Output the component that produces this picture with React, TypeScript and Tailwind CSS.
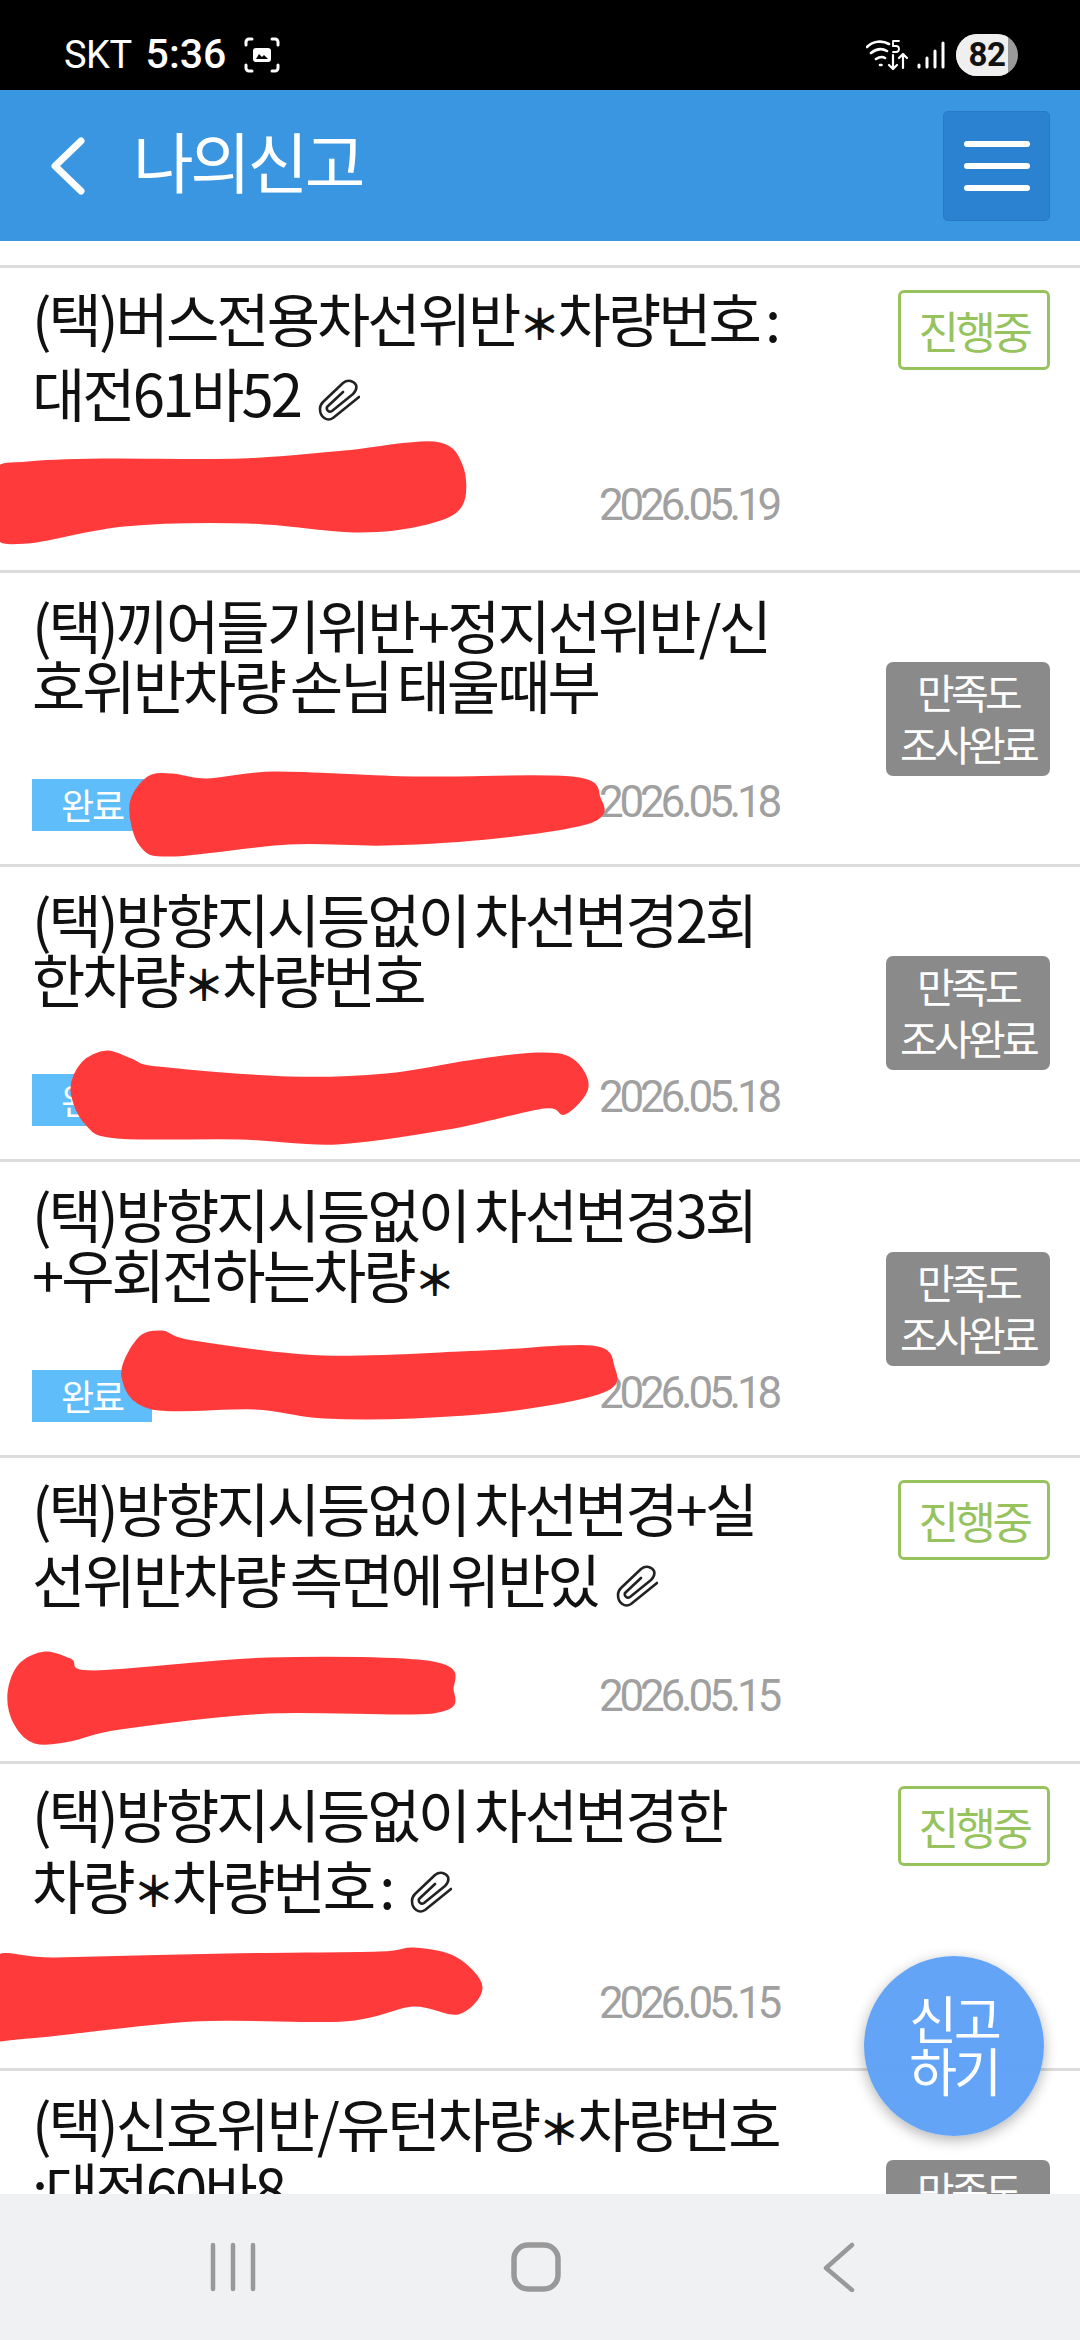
import React from "react";

const KR = "font-['Noto_Sans_CJK_KR','Noto_Sans',sans-serif]";

function smooth(p: number[][]) {
  const n = p.length;
  let d = `M${p[0][0]},${p[0][1]}`;
  for (let i = 0; i < n; i++) {
    const a = p[(i - 1 + n) % n], b = p[i], c = p[(i + 1) % n], e = p[(i + 2) % n];
    d += `C${b[0] + (c[0] - a[0]) / 6},${b[1] + (c[1] - a[1]) / 6} ${c[0] - (e[0] - b[0]) / 6},${c[1] - (e[1] - b[1]) / 6} ${c[0]},${c[1]}`;
  }
  return d + "Z";
}

const blobs: number[][][] = [
  [[-6,473],[28,463],[103,460],[241,460],[344,452],[434,443],[461,465],[461,505],[427,523],[358,531],[248,522],[124,525],[28,542],[-6,533]],
  [[131,805],[148,778],[172,775],[207,780],[275,773],[413,778],[572,778],[599,798],[592,821],[496,837],[386,844],[289,843],[172,855],[141,845]],
  [[72,1090],[83,1063],[107,1052],[131,1060],[158,1068],[289,1078],[386,1075],[468,1062],[537,1054],[572,1060],[587,1087],[565,1113],[544,1107],[448,1128],[337,1143],[241,1138],[117,1137],[86,1123]],
  [[123,1377],[138,1340],[162,1332],[193,1342],[324,1357],[482,1352],[592,1347],[613,1367],[606,1390],[523,1408],[413,1417],[324,1417],[255,1408],[152,1408]],
  [[9,1693],[20,1665],[45,1653],[70,1660],[95,1672],[268,1659],[433,1663],[452,1689],[433,1712],[268,1712],[120,1728],[70,1740],[35,1742],[15,1723]],
  [[-6,1960],[55,1959],[227,1955],[379,1953],[413,1949],[455,1958],[481,1987],[458,2013],[413,2005],[344,2020],[193,2020],[28,2037],[-6,2032]],
];

function Clip() {
  return (
    <svg viewBox="0 0 42 42" className="inline-block w-[42px] h-[42px] ml-[18px] align-[-4px]" fill="none" stroke="#222" strokeWidth="2.6" strokeLinecap="round" strokeLinejoin="round">
      <path d="M41 18 15 39C9 43 2 38 2 30c0-3 1-5 3-7L25 4c5-4 11-2 13 2 1 3 0 6-3 9L14 32c-3 2-6-1-5-4L25 13" />
    </svg>
  );
}

function Star() {
  return <span className="text-[42px] font-bold align-[2px] tracking-[-3px]">＊</span>;
}

type Row = { h: number; l: React.ReactNode; status: "p" | "s"; done?: boolean; date: string; clip?: boolean };

const rows: Row[] = [
  { h: 305, l: <>(택)버스전용차선위반<Star />차량번호 :<br />대전61바52</>, status: "p", date: "2026.05.19", clip: true },
  { h: 294, l: <>(택)끼어들기위반+정지선위반/신<br />호위반차량 손님 태울때부</>, status: "s", done: true, date: "2026.05.18" },
  { h: 295, l: <>(택)방향지시등없이 차선변경2회<br />한차량<Star />차량번호</>, status: "s", done: true, date: "2026.05.18" },
  { h: 296, l: <>(택)방향지시등없이 차선변경3회<br />+우회전하는차량<Star /></>, status: "s", done: true, date: "2026.05.18" },
  { h: 306, l: <>(택)방향지시등없이 차선변경+실<br />선위반차량 측면에 위반있</>, status: "p", date: "2026.05.15", clip: true },
  { h: 307, l: <>(택)방향지시등없이 차선변경한<br />차량<Star />차량번호 :</>, status: "p", date: "2026.05.15", clip: true },
  { h: 295, l: <>(택)신호위반/유턴차량<Star />차량번호<br />:대전60바8</>, status: "s", date: "" },
];

export default function App() {
  return (
    <div className={`relative w-[1080px] h-[2340px] flex flex-col overflow-hidden bg-white ${KR}`}>
      <div className="h-[90px] shrink-0 bg-black flex items-center justify-between pl-[64px] pr-[62px] pt-[20px] text-white font-['Roboto',sans-serif]">
        <div className="flex items-center">
          <span className="text-[38px] tracking-[-0.5px]">SKT</span>
          <span className="text-[41px] font-medium ml-[14px]">5:36</span>
          <svg viewBox="0 0 36 36" className="w-[36px] h-[36px] ml-[18px]" fill="none" stroke="#fff" strokeWidth="3" strokeLinecap="round">
            <path d="M8 2H5a3 3 0 0 0-3 3v3M28 2h3a3 3 0 0 1 3 3v3M8 34H5a3 3 0 0 1-3-3v-3M28 34h3a3 3 0 0 0 3-3v-3" />
            <rect x="9" y="11" width="18" height="14" rx="3" fill="#fff" stroke="none" />
            <path d="M12 22l3-5 3 3 2-2 4 4z" fill="#000" stroke="none" />
          </svg>
        </div>
        <div className="flex items-center">
          <svg viewBox="0 0 42 30" className="w-[42px] h-[30px]" fill="none" stroke="#fff" strokeWidth="2.6" strokeLinecap="round">
            <path d="M1 7C7 1 16 0 23 4M5 13c5-4 11-5 16-2M10 19c3-2 6-3 9-1M14 25h1.5" />
            <path d="M27 15v14m0 0-4-4m4 4 4-4M37 28V14m0 0-4 4m4-4 4 4" strokeWidth="2.2" />
            <path d="M27 1h6M27 1v5h3a2.5 2.5 0 0 1 0 6h-3" strokeWidth="1.8" />
          </svg>
          <svg viewBox="0 0 28 28" className="w-[28px] h-[28px] ml-[9px]" stroke="#fff" strokeWidth="3" strokeLinecap="round">
            <path d="M2 26v-2M10 26V17M18 26V10M26 26V2" />
          </svg>
          <div className="relative ml-[11px] w-[62px] h-[42px] rounded-[21px] bg-[#9a9a9a] overflow-hidden">
            <div className="absolute inset-y-0 left-0 w-[52px] bg-[#efefef]" />
            <span className="absolute inset-0 flex items-center justify-center text-[#111] text-[33px] font-bold tracking-[-0.5px]">82</span>
          </div>
        </div>
      </div>

      <header className="h-[151px] shrink-0 bg-[#3a96e0] flex items-center pl-[48px] pr-[30px]">
        <svg viewBox="0 0 40 60" className="w-[40px] h-[60px]" fill="none" stroke="#fff" strokeWidth="7" strokeLinecap="round" strokeLinejoin="round">
          <path d="M33 5 7 30l26 25" />
        </svg>
        <h1 className="ml-[45px] mb-[14px] text-[66px] leading-none font-normal text-white tracking-[-3.5px] flex-1">나의신고</h1>
        <div className="w-[107px] h-[110px] rounded-[5px] bg-[#2a82d1] border border-[#2779c4] flex flex-col items-center justify-center gap-[16px]">
          <div className="w-[66px] h-[6px] rounded-sm bg-white" />
          <div className="w-[66px] h-[6px] rounded-sm bg-white" />
          <div className="w-[66px] h-[6px] rounded-sm bg-white" />
        </div>
      </header>

      <main className="flex-1 overflow-hidden pt-[24px]">
        <div className="h-[3px] bg-[#dcdcdc]" />
        {rows.map((r, i) => (
          <div key={i} style={{ height: r.h }} className="flex border-b-[3px] border-[#dcdcdc] pl-[32px] pr-[30px] shrink-0">
            <div className="flex-1 flex flex-col min-w-0">
              <p className={`text-[58px] text-[#111] tracking-[-3px] [word-spacing:-4px] whitespace-nowrap ${r.clip ? "mt-[14px] leading-[71px]" : "mt-[21px] leading-[60px]"}`}>
                {r.l}
                {r.clip && <Clip />}
              </p>
              <div className="flex-1" />
              {r.date && (
                <div className={`flex items-center h-[52px] w-[746px] ${r.clip ? "mb-[39px]" : "mb-[33px]"}`}>
                  {r.done && (
                    <span className="w-[120px] h-[52px] pb-[3px] bg-[#5fbdf9] text-white text-[36px] tracking-[-2px] flex items-center justify-center">완료</span>
                  )}
                  <span className={`ml-auto text-[44px] text-[#a0a0a0] tracking-[-4.2px] font-['Roboto',sans-serif] ${r.done ? "pb-[6px]" : ""}`}>{r.date}</span>
                </div>
              )}
            </div>
            {r.status === "p" ? (
              <div className="self-start mt-[22px] w-[152px] h-[80px] rounded-[6px] border-[3px] border-[#97c35f] text-[#97c35f] text-[44px] tracking-[-3.4px] flex items-center justify-center">진행중</div>
            ) : (
              <div className="self-center w-[164px] h-[114px] pb-[4px] rounded-[7px] bg-[#8a8a8a] text-white text-[41px] tracking-[-3.7px] leading-[52px] flex flex-col items-center justify-center">
                <span>만족도</span>
                <span>조사완료</span>
              </div>
            )}
          </div>
        ))}
      </main>

      <nav className="h-[146px] shrink-0 bg-[#f0f1f3] flex items-center pl-[208px]">
        <svg viewBox="0 0 50 50" className="w-[50px] h-[50px]" stroke="#999" strokeWidth="4.5" strokeLinecap="round">
          <path d="M5 3v44M25 3v44M45 3v44" />
        </svg>
        <svg viewBox="0 0 50 50" className="w-[50px] h-[50px] ml-[253px]" fill="none" stroke="#999" strokeWidth="5.5">
          <rect x="3" y="3" width="44" height="44" rx="14" />
        </svg>
        <svg viewBox="0 0 34 50" className="w-[34px] h-[50px] ml-[261px]" fill="none" stroke="#999" strokeWidth="4.5" strokeLinecap="round" strokeLinejoin="round">
          <path d="M30 3 4 26l26 22" />
        </svg>
      </nav>

      <svg viewBox="0 0 1080 2340" className="absolute inset-0 w-[1080px] h-[2340px] pointer-events-none" fill="#ff3a3a" stroke="#ff3a3a" strokeWidth="3" strokeLinejoin="round">
        {blobs.map((b, i) => <path key={i} d={smooth(b)} />)}
      </svg>

      <div className="absolute left-[864px] top-[1956px] w-[180px] h-[180px] pb-[4px] rounded-full bg-[#5c9ff5]/95 shadow-[0_4px_14px_rgba(0,0,0,0.3)] text-white text-[52px] leading-[52px] tracking-[-3px] flex flex-col items-center justify-center">
        <span>신고</span>
        <span>하기</span>
      </div>
    </div>
  );
}
